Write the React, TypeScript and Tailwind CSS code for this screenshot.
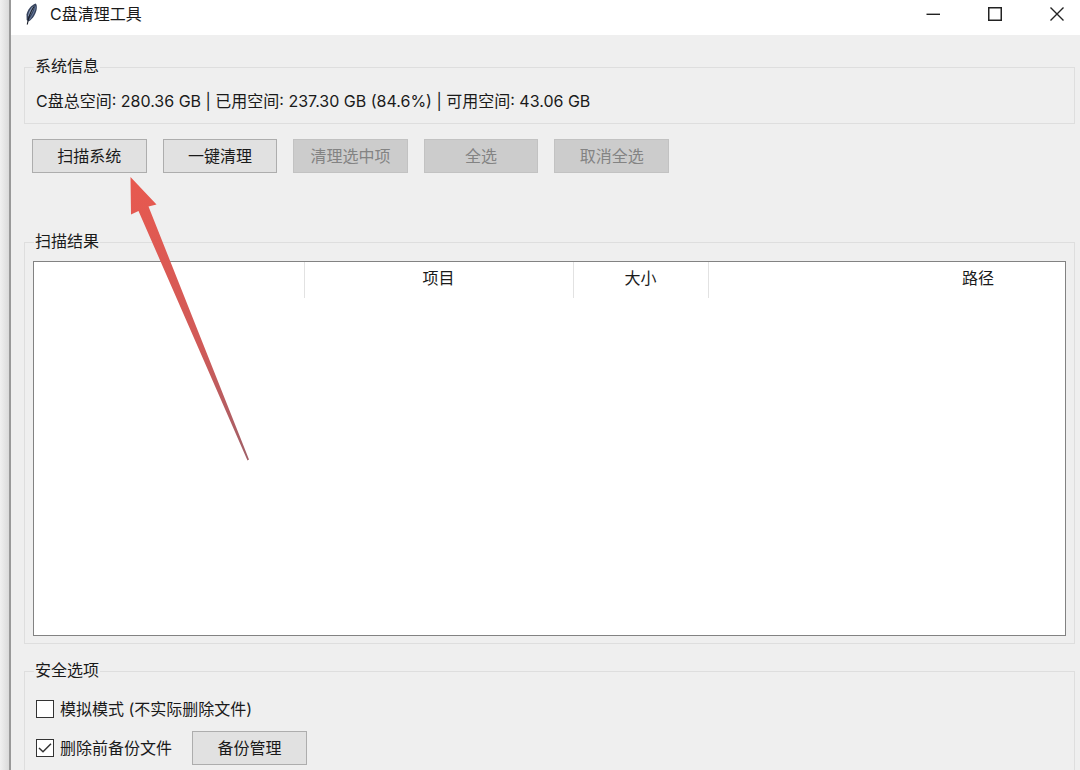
import React from 'react';

const columns = [
  { id: 'check', label: '', width: 'w-[270px]' },
  { id: 'item', label: '项目', width: 'w-[269px]' },
  { id: 'size', label: '大小', width: 'w-[135px]' },
  { id: 'path', label: '路径', width: 'w-[540px]' },
];

const actions = [
  { label: '扫描系统', disabled: false },
  { label: '一键清理', disabled: false },
  { label: '清理选中项', disabled: true },
  { label: '全选', disabled: true },
  { label: '取消全选', disabled: true },
];

function FeatherIcon() {
  return (
    <svg className="h-6 w-4 shrink-0" viewBox="0 0 16 24" aria-hidden="true">
      <path d="M12.5 1.5C8.5 3 4.5 7.500 3.500 12.500L3.700 18L5.500 19.500C10 17 13.500 11 13.800 6C13.900 3.500 13.500 2 12.500 1.500Z" fill="#35425c" />
      <path d="M11.500 3.500C8 5.500 5.500 9.500 5 13.500L6 15C8.500 11.500 10.500 7.500 11.500 3.500Z" fill="#8b9bb8" />
      <path d="M12.500 4.500C11.800 9 9.500 13.500 6.500 17.500" fill="none" stroke="#66799b" strokeWidth="1.200" />
      <path d="M11 4.500C8 9 5.500 14.500 4.300 22.500" fill="none" stroke="#1b202b" strokeWidth="1.200" />
    </svg>
  );
}

function TitleBar() {
  const control = 'flex h-full w-[46px] items-center justify-center';
  return (
    <header className="flex h-[35px] items-center justify-between bg-white pb-2 pl-3">
      <div className="flex items-center gap-2">
        <FeatherIcon />
        <h1 className="pl-[3px]">C盘清理工具</h1>
      </div>
      <div className="flex h-full items-center gap-4 text-[#222]">
        <button className={control} aria-label="最小化">
          <svg className="h-4 w-4" viewBox="0 0 16 16" stroke="currentColor" strokeWidth="1.400">
            <path d="M1.500 8.300H15" />
          </svg>
        </button>
        <button className={control} aria-label="最大化">
          <svg className="h-4 w-4" viewBox="0 0 16 16" fill="none" stroke="currentColor" strokeWidth="1.500">
            <rect x="1.750" y="1.750" width="12.500" height="12.500" />
          </svg>
        </button>
        <button className={control} aria-label="关闭">
          <svg className="h-4 w-4" viewBox="0 0 16 16" fill="none" stroke="currentColor" strokeWidth="1.400">
            <path d="M1.500 1.500L14.500 14.500M14.500 1.500L1.500 14.500" />
          </svg>
        </button>
      </div>
    </header>
  );
}

function ToolButton({ label, disabled = false }: { label: string; disabled?: boolean }) {
  return (
    <button
      disabled={disabled}
      className="h-[34px] w-full border border-[#adadad] bg-[#e1e1e1] leading-6 whitespace-nowrap disabled:border-[#c2c2c2] disabled:bg-[#cccccc] disabled:text-[#838383]"
    >
      {label}
    </button>
  );
}

function Legend({ children }: { children: React.ReactNode }) {
  return <legend className="ml-px px-px pb-0.5 leading-[22px]">{children}</legend>;
}

function CheckOption({ id, label, checked = false }: { id: string; label: string; checked?: boolean }) {
  return (
    <div className="flex h-6 items-center gap-1.5">
      <span className="relative flex h-[18px] w-[18px]">
        <input
          id={id}
          type="checkbox"
          defaultChecked={checked}
          className="peer h-[18px] w-[18px] appearance-none border border-[#333] bg-white"
        />
        <svg
          className="pointer-events-none absolute inset-0 hidden h-[18px] w-[18px] peer-checked:block"
          viewBox="0 0 18 18"
          fill="none"
          stroke="#333"
          strokeWidth="1.500"
        >
          <path d="M3 9L7 12.800L15 4.800" />
        </svg>
      </span>
      <label htmlFor={id}>{label}</label>
    </div>
  );
}

function PointerArrow() {
  return (
    <svg
      className="pointer-events-none absolute top-[141px] left-[118px] h-[286px] w-[122px]"
      viewBox="0 0 122 286"
      aria-hidden="true"
    >
      <defs>
        <linearGradient id="arrow" x1="0" y1="0" x2="0" y2="1">
          <stop offset="0" stopColor="#e8594f" />
          <stop offset="0.600" stopColor="#d05a58" />
          <stop offset="1" stopColor="#a06068" />
        </linearGradient>
      </defs>
      <path d="M1.500 1L27.500 28.500L19.500 30.500L120 283.500L118.500 284.500L9.500 35L2 38.500Z" fill="url(#arrow)" />
    </svg>
  );
}

export default function App() {
  return (
    <div className="flex min-h-screen bg-[#efefef] font-['Inter','Noto_Sans_CJK_SC',sans-serif] text-base leading-6 text-[#1a1a1a]">
      <div className="w-[9px] shrink-0 bg-linear-to-r from-[#f0f0f0] to-[#dadada]" />
      <div className="flex min-w-0 flex-1 flex-col border-l-2 border-[#999]">
        <TitleBar />
        <main className="relative flex flex-1 flex-col pt-5 pr-[5px] pl-[13px]">
          <fieldset className="border border-[#dedede] px-2 pt-2.5 pb-2.5">
            <Legend>系统信息</Legend>
            <p className="pl-[3px]">C盘总空间: 280.36 GB | 已用空间: 237.30 GB (84.6%) | 可用空间: 43.06 GB</p>
          </fieldset>

          <div className="mt-[15px] ml-2 grid w-[637px] grid-cols-5 gap-4">
            {actions.map((action) => (
              <ToolButton key={action.label} label={action.label} disabled={action.disabled} />
            ))}
          </div>

          <fieldset className="mt-[57px] min-w-0 border border-[#dedede] px-2 pt-[7px] pb-[7px]">
            <Legend>扫描结果</Legend>
            <div className="h-[375px] overflow-hidden border border-[#828282] bg-white">
              <table className="w-[1214px] table-fixed border-collapse">
                <thead>
                  <tr className="h-9">
                    {columns.map((col) => (
                      <th key={col.id} className={`${col.width} border-r border-[#e2e2e2] pb-1 font-normal`}>
                        {col.label}
                      </th>
                    ))}
                  </tr>
                </thead>
                <tbody />
              </table>
            </div>
          </fieldset>

          <fieldset className="mt-[15px] flex-1 border border-b-0 border-[#dedede] px-2 pt-3.5">
            <Legend>安全选项</Legend>
            <div className="flex flex-col gap-2.5 pl-[3px]">
              <CheckOption id="simulate" label="模拟模式 (不实际删除文件)" />
              <div className="flex items-center gap-5">
                <CheckOption id="backup" label="删除前备份文件" checked />
                <div className="w-[115px]">
                  <ToolButton label="备份管理" />
                </div>
              </div>
            </div>
          </fieldset>

          <PointerArrow />
        </main>
      </div>
    </div>
  );
}
